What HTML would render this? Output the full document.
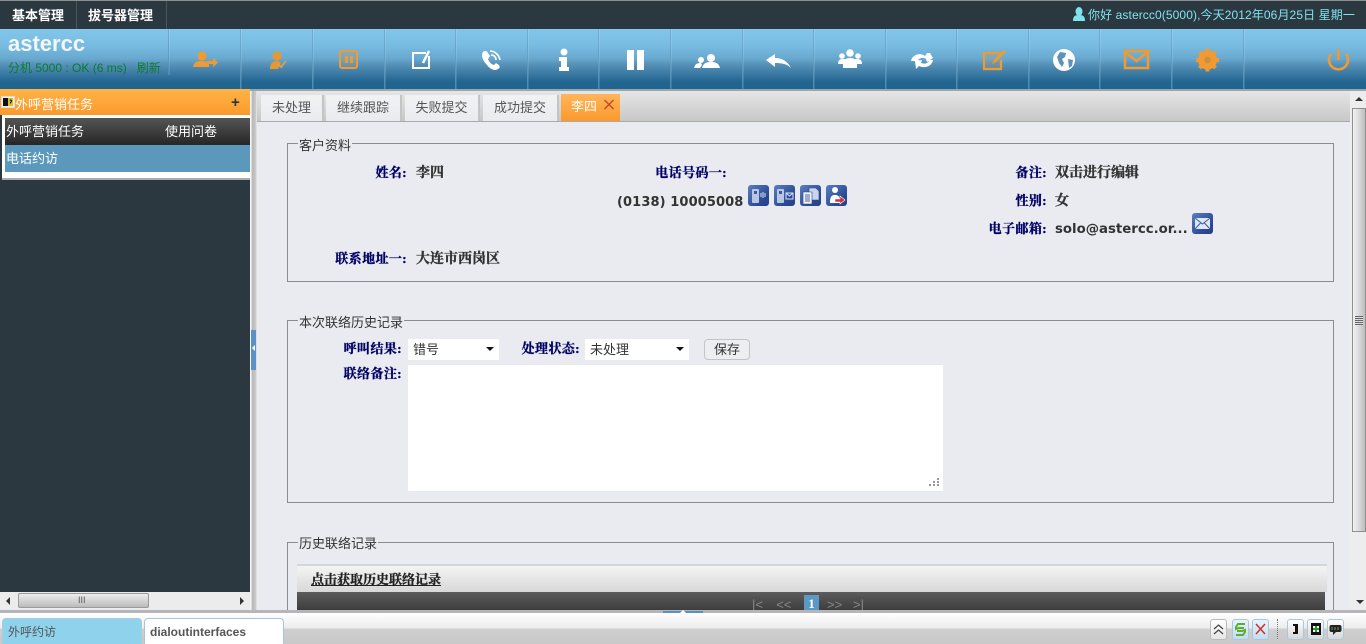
<!DOCTYPE html>
<html lang="zh"><head><meta charset="utf-8"><title>astercc</title>
<style>
html,body{margin:0;padding:0;width:1366px;height:644px;overflow:hidden;background:#e9ebf0}
body{position:relative;font:13px "Liberation Sans","WenQuanYi Zen Hei","Noto Sans CJK SC",sans-serif;color:#222}
.a,.t,.l,.s,.sep,svg.a{position:absolute}
.t{white-space:nowrap;line-height:16px}
.l{position:absolute;white-space:nowrap;line-height:16px;font-family:"Liberation Serif","Noto Serif CJK SC",serif;font-weight:700;font-size:13px;letter-spacing:.4px;color:#000066;text-align:right;-webkit-text-stroke:.35px #000066;margin-top:1px}
.v{position:absolute;white-space:nowrap;line-height:16px;font-family:"DejaVu Sans","Noto Serif CJK SC",serif;font-weight:700;font-size:13px;color:#333}
.cn{-webkit-text-stroke:.35px #333;font-size:14px;margin-top:1px}
.sep{top:29px;width:1px;height:60px;background:linear-gradient(#6fb0d6,#5d9cc2 60%,#4c8ab0);box-shadow:1px 0 0 rgba(255,255,255,.12)}
.tab{position:absolute;top:95px;height:26px;background:linear-gradient(#f2f2f2,#e9ebf0);box-shadow:2px 0 0 #c4c4c4;color:#555;text-align:center;line-height:26px;font-size:13px}
.fs{position:absolute;left:287px;width:1047px;border:1px solid #8a8d90;box-sizing:border-box}
.leg{position:absolute;background:#e9ebf0;padding:0 1px;line-height:14px;color:#333;font-size:13px;white-space:nowrap;margin-top:1px}
.ic{position:absolute;width:21px;height:21px;border-radius:3px;background:linear-gradient(135deg,#5a7fc0,#2a4a94 70%,#263f85);overflow:hidden}
.sel{position:absolute;top:339px;height:21px;background:#fff;box-sizing:border-box;padding-left:5px;line-height:22px;font-size:13px;color:#333}
.sel:after{content:"";position:absolute;right:5px;top:8px;border:4px solid transparent;border-top:4px solid #111;border-bottom:0}
.btn{position:absolute;width:17px;height:21px;top:619px;border:1px solid #a9c8e0;border-radius:3px;background:linear-gradient(#fff,#d6d6d6);box-sizing:border-box}
</style></head><body>
<!-- top bar -->
<div class="a" style="left:0;top:0;width:1366px;height:29px;background:#2c3840;border-top:1px solid #8b8f92;box-sizing:border-box"></div>
<div class="t" style="left:12px;top:8px;font-weight:700;color:#fff">基本管理</div>
<div class="a" style="left:76px;top:1px;width:1px;height:28px;background:#4a555c"></div>
<div class="t" style="left:88px;top:8px;font-weight:700;color:#fff">拔号器管理</div>
<div class="a" style="left:166px;top:1px;width:1px;height:28px;background:#4a555c"></div>
<svg class="a" style="left:1072px;top:7px" width="14" height="15" viewBox="0 0 14 15"><ellipse cx="7" cy="4.500" rx="3.500" ry="4.500" fill="#7fe3ee"/><path d="M1 14c0-5 2-6 6-6s6 1 6 6z" fill="#7fe3ee"/></svg>
<div class="t" style="left:1088px;top:7px;color:#7fe3ee;font-size:12px;letter-spacing:.1px">你好 astercc0(5000),今天2012年06月25日 星期一</div>

<!-- toolbar -->
<div class="a" style="left:0;top:29px;width:1366px;height:60px;background:linear-gradient(#82c6ec 0,#7abde3 25%,#68a8cf 50%,#5893b9 58%,#34749e 78%,#1f6590 90%,#1f6590 100%)"></div>
<div class="a" style="left:0;top:89px;width:1366px;height:2px;background:#9aa5ad"></div>
<div class="t" style="left:8px;top:32px;font-size:22px;line-height:24px;font-weight:700;color:#f2f7fb">astercc</div>
<div class="t" style="left:8px;top:60px;color:#0c7a2e;font-size:12px">分机 5000 : OK (6 ms)&nbsp;&nbsp; 刷新</div>
<div class="sep" style="left:168px;height:46px"></div><div class="sep" style="left:240px"></div><div class="sep" style="left:312px"></div><div class="sep" style="left:384px"></div><div class="sep" style="left:455px"></div><div class="sep" style="left:527px"></div><div class="sep" style="left:598px"></div><div class="sep" style="left:670px"></div><div class="sep" style="left:742px"></div><div class="sep" style="left:813px"></div><div class="sep" style="left:885px"></div><div class="sep" style="left:956px"></div><div class="sep" style="left:1028px"></div><div class="sep" style="left:1099px"></div><div class="sep" style="left:1171px"></div><div class="sep" style="left:1243px"></div>

<svg class="a" style="left:0;top:29px" width="1366" height="60" viewBox="0 29 1366 60">
 <!-- person arrow -->
 <g fill="#f19a32"><circle cx="202" cy="56" r="4.500"/><path d="M193 67c1-5 4-6 9-6 4 0 6 1 7 3v3z"/><path d="M207 61h6v-3l5 4.500-5 4.500v-3h-6z"/></g>
 <!-- person check -->
 <g fill="#e8962f"><circle cx="277" cy="56" r="4.500"/><path d="M270 69c0-6 3-8 7-8 2 0 3 1 4 2l-3 6z"/></g><path d="M278 64l3 3 5-6" fill="none" stroke="#c9a35a" stroke-width="2"/>
 <!-- pause box -->
 <rect x="340" y="51" width="17" height="17" rx="2" fill="#b59a62" fill-opacity=".3" stroke="#e89c3e" stroke-width="2"/>
 <rect x="345" y="56" width="3" height="7" fill="#e89c3e"/><rect x="350" y="56" width="3" height="7" fill="#e89c3e"/>
 <!-- note -->
 <path d="M426 53h-13v15h16v-12" fill="none" stroke="#fff" stroke-width="2"/><path d="M429 51l-6 12" stroke="#fff" stroke-width="2.500"/>
 <!-- phone -->
 <path d="M483 52c2-2 4-1 5 1l2 3-2 3c1 3 3 5 6 6l2-2 3 2c1 2 1 3-1 4-3 2-7 1-11-4-5-5-6-10-4-13z" fill="#fff"/>
 <path d="M490 51c5 0 9 4 10 9M491 55c3 0 5 2 5 5" fill="none" stroke="#fff" stroke-width="1.600"/>
 <!-- info -->
 <circle cx="564" cy="52" r="3.500" fill="#fff"/><path d="M559 57h8v10h2v4h-10v-4h2v-6h-2z" fill="#fff"/>
 <!-- pause -->
 <rect x="627" y="50" width="7" height="20" fill="#fff"/><rect x="637" y="50" width="7" height="20" fill="#fff"/>
 <!-- two persons -->
 <g fill="#fff"><circle cx="701" cy="60" r="3"/><path d="M694 68c1-4 3-5 7-5l1 2-2 3z"/><circle cx="711" cy="58" r="4"/><path d="M702 68c1-4 3-6 9-6s8 2 9 6z"/></g>
 <!-- back -->
 <path d="M766 60l9-6v4c8 0 13 4 16 10-4-4-9-5-16-5v4z" fill="#fff"/>
 <!-- group -->
 <g fill="#fff"><circle cx="850" cy="53" r="3.800"/><circle cx="842" cy="56" r="2.800"/><circle cx="858" cy="56" r="2.800"/><path d="M838 64c0-4 2-5 5-5h14c3 0 5 1 5 5z"/><path d="M843 68v-4c0-4 3-6 7-6s7 2 7 6v4z"/></g>
 <!-- sync -->
 <path d="M911 61c1-6 9-9 14-5l2-3 3 0 3 5-6 4-1-3c-3-2-6-1-8 1l3 1z" fill="#fff"/><path d="M933 60c-1 6-8 9-14 6l-3 3-1-8 7-1-1 3c3 1 6 1 8-2l-3-1z" fill="#fff"/>
 <!-- edit orange -->
 <path d="M1001 53h-17v16h17v-9" fill="#d99a4a" fill-opacity=".2" stroke="#f19a32" stroke-width="2.200"/><path d="M1004 50l2 2-10 10-4 2 2-4z" fill="#f19a32"/>
 <!-- globe -->
 <circle cx="1064" cy="60" r="11" fill="#fff"/><path d="M1060 52l6 1-1 4-3 2 2 4-2 4-3-4-2-6zM1068 59l5 1-1 6-3 2z" fill="#5d93b6"/>
 <!-- mail -->
 <rect x="1125" y="51" width="23" height="17" fill="none" stroke="#f19a32" stroke-width="2.500"/><path d="M1125 52l11.500 9 11.500-9" fill="none" stroke="#f19a32" stroke-width="2.500"/>
 <!-- gear -->
 <g stroke="#f19a32" stroke-width="4"><path d="M1207.500 48.500v23M1196 60h23M1199.500 52l16 16M1215.500 52l-16 16"/></g><circle cx="1207.500" cy="60" r="6.500" fill="none" stroke="#f19a32" stroke-width="6"/><circle cx="1207.500" cy="60" r="3.300" fill="#c98f45"/>
 <!-- power -->
 <path d="M1331 54a9.500 9.500 0 1 0 15 0" fill="none" stroke="#f19a32" stroke-width="2.600"/><path d="M1338.500 49v11" stroke="#f19a32" stroke-width="2.600"/>
</svg>

<!-- left panel -->
<div class="a" style="left:0;top:91px;width:250px;height:502px;background:#2c3840"></div>
<div class="a" style="left:0;top:89px;width:250px;height:26px;background:linear-gradient(#ffb347,#fb9a2c)"></div>
<svg class="a" style="left:1px;top:96px" width="14" height="12"><rect x=".5" y=".5" width="13" height="11" fill="#eee" stroke="#ddd"/><rect x="2" y="2" width="5" height="8" fill="#111"/><rect x="7" y="2" width="5" height="8" fill="#d8c020"/><path d="M9 4.500c1-1 2 0 1.500 1L9.500 6.500v1" fill="none" stroke="#111"/></svg>
<div class="t" style="left:15px;top:97px;color:#fff">外呼营销任务</div>
<div class="t" style="left:231px;top:95px;color:#333;font-weight:700;font-size:15px">+</div>
<div class="a" style="left:2px;top:115px;width:248px;height:63px;background:#fff;border-bottom:2px solid #a8acaf"></div>
<div class="a" style="left:5px;top:118px;width:245px;height:27px;background:linear-gradient(#555,#262626)"></div>
<div class="t" style="left:6px;top:124px;color:#fff">外呼营销任务</div>
<div class="t" style="left:165px;top:124px;color:#fff">使用问卷</div>
<div class="a" style="left:5px;top:145px;width:245px;height:27px;background:#5b98bb"></div>
<div class="t" style="left:6px;top:151px;color:#fff">电话约访</div>
<!-- left scrollbar -->
<div class="a" style="left:0;top:592px;width:250px;height:17px;background:#ececec"></div>
<div class="a" style="left:18px;top:593px;width:131px;height:15px;border:1px solid #9a9a9a;border-radius:2px;box-sizing:border-box;background:linear-gradient(#eee,#bbb)"></div>
<div class="t" style="left:78px;top:592px;font-size:9px;color:#555">III</div>
<div class="a" style="left:6px;top:597px;border:4px solid transparent;border-right:4px solid #333;border-left:0"></div>
<div class="a" style="left:240px;top:597px;border:4px solid transparent;border-left:4px solid #333;border-right:0"></div>

<!-- splitter -->
<div class="a" style="left:250px;top:91px;width:7px;height:520px;background:linear-gradient(90deg,#f6f6f6 0,#f6f6f6 15%,#b8b8b8 30%,#c8c8c8 80%,#eee)"></div>
<div class="a" style="left:251px;top:330px;width:5px;height:40px;background:#5b90c8"></div>
<div class="a" style="left:252px;top:345px;border:3px solid transparent;border-right:3px solid #fff;border-left:0"></div>

<!-- tab strip -->
<div class="a" style="left:257px;top:91px;width:1093px;height:30px;background:linear-gradient(#e6e6e6,#c8c8c8);border-bottom:1px solid #aaa;box-sizing:content-box"></div>
<div class="tab" style="left:261px;width:61px">未处理</div>
<div class="tab" style="left:326px;width:74px">继续跟踪</div>
<div class="tab" style="left:405px;width:73px">失败提交</div>
<div class="tab" style="left:483px;width:74px">成功提交</div>
<div class="a" style="left:561px;top:94px;width:59px;height:27px;background:linear-gradient(#ffb55a,#fb9a2c)"></div>
<div class="t" style="left:571px;top:99px;color:#fff">李四</div>
<svg class="a" style="left:603px;top:99px" width="12" height="12"><path d="M1.500 1l9 9M10.500 1l-9 9" stroke="#c0452a" stroke-width="1.300"/></svg>

<!-- fieldset 1 -->
<div class="fs" style="top:143px;height:139px"></div>
<div class="leg" style="left:298px;top:138px">客户资料</div>
<div class="l" style="left:300px;top:164px;width:107px">姓名:</div>
<div class="v cn" style="left:416px;top:164px">李四</div>
<div class="l" style="left:620px;top:164px;width:107px">电话号码一:</div>
<div class="v" style="left:617px;top:195px;font-size:13px;letter-spacing:.1px">(0138) 10005008</div>
<div class="ic" style="left:748px;top:185px"><svg width="21" height="21"><rect x="4" y="4" width="7" height="14" rx="1" fill="#b8c6e2"/><rect x="6" y="6" width="3" height="3" fill="#3d5ca0"/><path d="M13 8v4M15 7v6M17 8v4" stroke="#dde5f5"/></svg></div>
<div class="ic" style="left:774px;top:185px"><svg width="21" height="21"><rect x="3" y="4" width="7" height="14" rx="1" fill="#b8c6e2"/><rect x="5" y="6" width="3" height="3" fill="#3d5ca0"/><path d="M12 8h7v6h-7zM12 8l3.500 3 3.500-3" fill="none" stroke="#dde5f5"/></svg></div>
<div class="ic" style="left:800px;top:185px"><svg width="21" height="21"><path d="M9 3h7l3 3v9H9z" fill="#c8d4ec" stroke="#27407f" stroke-width=".6"/><path d="M3 7h9v12H3z" fill="#eef2fa" stroke="#27407f" stroke-width=".6"/><path d="M5 10h5M5 12h5M5 14h5M5 16h5" stroke="#4a66a8"/></svg></div>
<div class="ic" style="left:826px;top:185px"><svg width="21" height="21"><circle cx="9" cy="5" r="3" fill="#fff"/><path d="M4 18c0-7 2-8 5-8s5 1 5 8z" fill="#fff"/><path d="M9 14h5v-3l5 4-5 4v-2H9z" fill="#d42a34" stroke="#fff" stroke-width=".6"/></svg></div>

<div class="l" style="left:940px;top:164px;width:107px">备注:</div>
<div class="v cn" style="left:1055px;top:164px">双击进行编辑</div>
<div class="l" style="left:940px;top:192px;width:107px">性别:</div>
<div class="v cn" style="left:1055px;top:192px">女</div>
<div class="l" style="left:940px;top:220px;width:107px">电子邮箱:</div>
<div class="v" style="left:1055px;top:222px;font-size:13.300px">solo@astercc.or...</div>
<div class="ic" style="left:1192px;top:213px"><svg width="21" height="21"><rect x="3" y="5" width="15" height="11" fill="#dfe6f4"/><path d="M3 5l7.500 6 7.500-6M3 16l5.500-6M18 16l-5.500-6" fill="none" stroke="#3d5ca0"/></svg></div>
<div class="l" style="left:300px;top:250px;width:107px">联系地址一:</div>
<div class="v cn" style="left:416px;top:250px">大连市西岗区</div>

<!-- fieldset 2 -->
<div class="fs" style="top:320px;height:183px"></div>
<div class="leg" style="left:298px;top:315px">本次联络历史记录</div>
<div class="l" style="left:300px;top:340px;width:102px">呼叫结果:</div>
<div class="sel" style="left:408px;width:91px">错号</div>
<div class="l" style="left:490px;top:340px;width:90px">处理状态:</div>
<div class="sel" style="left:585px;width:104px">未处理</div>
<div class="a" style="left:704px;top:339px;width:46px;height:21px;border:1px solid #c4c4c4;border-radius:4px;box-sizing:border-box;background:#eceef1;text-align:center;line-height:20px;color:#333">保存</div>
<div class="l" style="left:300px;top:365px;width:102px">联络备注:</div>
<div class="a" style="left:408px;top:365px;width:535px;height:126px;background:#fff"></div>
<svg class="a" style="left:928px;top:477px" width="12" height="10" fill="#999"><rect x="1" y="7" width="2" height="2"/><rect x="5" y="7" width="2" height="2"/><rect x="9" y="7" width="2" height="2"/><rect x="5" y="4" width="2" height="2"/><rect x="9" y="4" width="2" height="2"/><rect x="9" y="1" width="2" height="2"/></svg>

<!-- fieldset 3 -->
<div class="fs" style="top:542px;height:80px"></div>
<div class="leg" style="left:298px;top:536px">历史联络记录</div>
<div class="a" style="left:297px;top:564px;width:1030px;height:28px;background:linear-gradient(#f4f4f4,#d8d8d8);border-top:2px solid #d4d6d8;box-sizing:border-box"></div>
<div class="t" style="left:311px;top:572px;font-family:'Liberation Serif','Noto Serif CJK SC',serif;font-weight:700;color:#222;text-decoration:underline;-webkit-text-stroke:.35px #222">点击获取历史联络记录</div>
<div class="a" style="left:297px;top:592px;width:1028px;height:20px;background:linear-gradient(#5c5c5c,#3a3a3a)"></div>
<div class="t" style="left:752px;top:597px;color:#888;font-size:13px;word-spacing:3px">|&lt; &nbsp;&lt;&lt;</div>
<div class="a" style="left:804px;top:595px;width:15px;height:17px;background:#5b98c4;color:#fff;text-align:center;font:700 13px/18px 'Liberation Serif',serif">1</div>
<div class="t" style="left:827px;top:597px;color:#888;font-size:13px">&gt;&gt; &nbsp;&nbsp;&gt;|</div>

<!-- main scrollbar -->
<div class="a" style="left:1350px;top:91px;width:16px;height:520px;background:#ededee"></div>
<div class="a" style="left:1355px;top:97px;border:4px solid transparent;border-bottom:4px solid #333;border-top:0"></div>
<div class="a" style="left:1352px;top:108px;width:14px;height:424px;border:1px solid #8f8f8f;box-sizing:border-box;background:linear-gradient(90deg,#f2f2f2,#dcdcdc 45%,#bdbdbd)"></div>
<div class="a" style="left:1355px;top:316px;width:8px;height:9px;background:repeating-linear-gradient(#666 0 1px,#ddd 1px 2px)"></div>
<div class="a" style="left:1356px;top:600px;border:4px solid transparent;border-top:4px solid #333;border-bottom:0"></div>

<!-- bottom bar -->
<div class="a" style="left:0;top:610px;width:1366px;height:3px;background:#b4b6b8"></div>
<div class="a" style="left:663px;top:611px;width:40px;height:3px;background:#5b8fc0"></div>
<div class="a" style="left:680px;top:610px;border:3px solid transparent;border-bottom:3px solid #fff;border-top:0"></div>
<div class="a" style="left:0;top:613px;width:1366px;height:31px;background:linear-gradient(#fff,#ededed 48%,#cfcfcf 52%,#c8c8c8)"></div>
<div class="a" style="left:2px;top:618px;width:140px;height:26px;background:#8ed2ec;border:1px solid #a8cde0;border-bottom:0;border-radius:4px 4px 0 0;box-sizing:border-box"></div>
<div class="t" style="left:8px;top:624px;color:#555;font-size:12px">外呼约访</div>
<div class="a" style="left:144px;top:618px;width:140px;height:26px;background:#fff;border:1px solid #a8c4dc;border-bottom:0;border-radius:4px 4px 0 0;box-sizing:border-box"></div>
<div class="t" style="left:150px;top:624px;color:#555;font-weight:700;font-size:12px">dialoutinterfaces</div>

<div class="btn" style="left:1210px;border-color:#bbb;background:linear-gradient(#fff,#e6e6e6)"><svg width="15" height="19"><path d="M3 9l4.500-4 4.500 4M3 14l4.500-4 4.500 4" fill="none" stroke="#444" stroke-width="1.200"/></svg></div>
<div class="btn" style="left:1232px;background:linear-gradient(#e8f3fb,#c4ddf0)"><svg width="15" height="19"><path d="M12 4H5L3 7v2l3-1h5M3 15h7l2-3V10l-3 1H4" fill="none" stroke="#5cb030" stroke-width="2"/></svg></div>
<div class="btn" style="left:1252px;background:linear-gradient(#e8f3fb,#c4ddf0)"><svg width="15" height="19"><path d="M3 4l9 10M12 4l-9 10" stroke="#c8322a" stroke-width="1.500"/></svg></div>
<div class="a" style="left:1277px;top:619px;width:0;height:20px;border-left:1px dotted #777"></div>
<div class="btn" style="left:1287px"><svg width="15" height="19"><path d="M5 4h5v10H5v-2h2V6H5z" fill="#111"/></svg></div>
<div class="btn" style="left:1307px"><svg width="15" height="19"><rect x="3" y="3" width="10" height="12" fill="#111"/><rect x="5" y="6" width="6" height="6" fill="#fff"/><path d="M8 6v6M5 9h6" stroke="#2a9a2a" stroke-width="2"/></svg></div>
<div class="btn" style="left:1327px"><svg width="15" height="19"><rect x="1.500" y="5" width="12" height="7" rx="2" fill="#222"/><path d="M5 12v3l3-3z" fill="#222"/><path d="M4 7v3M7 7v3M10 7v3" stroke="#7a9a5a"/></svg></div>
</body></html>
